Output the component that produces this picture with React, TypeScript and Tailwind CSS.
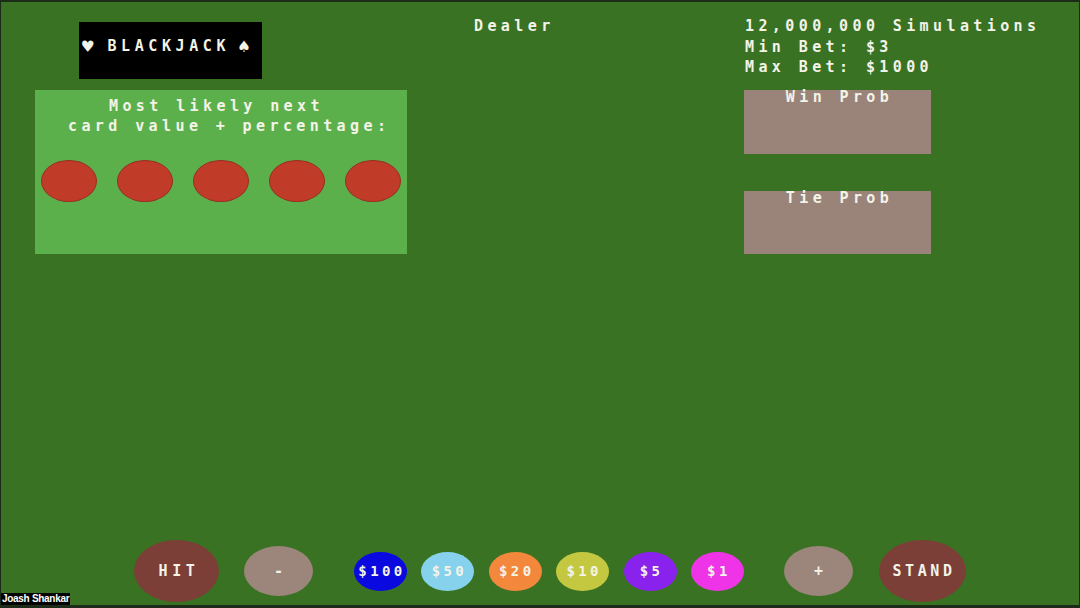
import React from 'react';

const mono = "font-['DejaVu_Sans_Mono','Liberation_Mono',monospace] font-bold";

const chips = [
  { label: '$100', bg: 'bg-[#0a0ae0]' },
  { label: '$50', bg: 'bg-[#86d2ec]' },
  { label: '$20', bg: 'bg-[#f3883c]' },
  { label: '$10', bg: 'bg-[#c4c840]' },
  { label: '$5', bg: 'bg-[#8a22ee]' },
  { label: '$1', bg: 'bg-[#ee34e6]' },
];

export default function App() {
  return (
    <div className="relative w-[1080px] h-[608px] overflow-hidden bg-[#3a7224] border-t-2 border-b-[3px] border-x border-[#1d2b19] flex flex-col text-[#f3f3e8]">
      {/* top area */}
      <div className="flex items-start">
        {/* left column */}
        <div className="ml-[34px] w-[372px] flex flex-col">
          <div className={`ml-[44px] mt-[20px] w-[183px] h-[57px] bg-black flex items-center pb-[8px] pl-[3px] text-[15px] ${mono}`}>
            <span className="text-[19px] leading-none">♥</span>
            <span className="ml-[14px] tracking-[4.6px]">BLACKJACK</span>
            <span className="ml-[8px] text-[19px] leading-none">♠</span>
          </div>

          <div className={`mt-[11px] h-[164px] bg-[#5cb04b] pt-[6px] text-[15px] leading-[20px] tracking-[4.4px] ${mono}`}>
            <div className="pl-[74px]">Most likely next</div>
            <div className="pl-[33px]">card value + percentage:</div>
            <div className="mt-[24px] pl-[6px] flex gap-[20px]">
              {[0, 1, 2, 3, 4].map((i) => (
                <div
                  key={i}
                  className="w-[56px] h-[42px] rounded-[50%] bg-[#c13b29] border border-[#9a2e22]"
                />
              ))}
            </div>
          </div>
        </div>

        {/* dealer */}
        <div className={`ml-[67px] mt-[14px] w-[270px] text-[15px] leading-[20px] tracking-[4.4px] ${mono}`}>
          Dealer
        </div>

        {/* right column */}
        <div className="flex flex-col">
          <div className={`mt-[14px] pl-[1px] text-[15px] leading-[20.5px] tracking-[4.4px] ${mono}`}>
            <div>12,000,000 Simulations</div>
            <div>Min Bet: $3</div>
            <div>Max Bet: $1000</div>
          </div>
          <div className={`mt-[12px] w-[187px] h-[64px] bg-[#9a8479] text-center text-[15px] leading-[14px] tracking-[4.4px] ${mono}`}>
            <span className="ml-[4px]">Win Prob</span>
          </div>
          <div className={`mt-[37px] w-[187px] h-[63px] bg-[#9a8479] text-center text-[15px] leading-[14px] tracking-[4.4px] ${mono}`}>
            <span className="ml-[4px]">Tie Prob</span>
          </div>
        </div>
      </div>

      {/* bottom controls */}
      <div className={`mt-auto mb-[2px] h-[64px] pl-[133px] flex items-center text-[15px] ${mono}`}>
        <div className="w-[85px] h-[62px] rounded-[50%] bg-[#7b3f37] flex items-center justify-center tracking-[4.6px]">
          <span className="ml-[5px]">HIT</span>
        </div>
        <div className="ml-[25px] w-[69px] h-[50px] rounded-[50%] bg-[#9c857a] flex items-center justify-center">
          -
        </div>
        <div className="ml-[41px] flex gap-[14.4px]">
          {chips.map((c) => (
            <div
              key={c.label}
              className={`w-[53px] h-[39px] rounded-[50%] ${c.bg} flex items-center justify-center text-[14px] tracking-[3.4px]`}
            >
              <span className="ml-[3px]">{c.label}</span>
            </div>
          ))}
        </div>
        <div className="ml-[40px] w-[69px] h-[50px] rounded-[50%] bg-[#9c857a] flex items-center justify-center">
          +
        </div>
        <div className="ml-[26px] w-[87px] h-[62px] rounded-[50%] bg-[#7b3f37] flex items-center justify-center tracking-[3.6px]">
          <span className="ml-[3px]">STAND</span>
        </div>
      </div>

      {/* participant name overlay */}
      <div className="absolute left-0 bottom-0 bg-black px-[1px] text-white text-[10px] leading-[12px] font-bold font-['Liberation_Sans',Arial,sans-serif] tracking-[-0.3px]">
        Joash Shankar
      </div>
    </div>
  );
}
